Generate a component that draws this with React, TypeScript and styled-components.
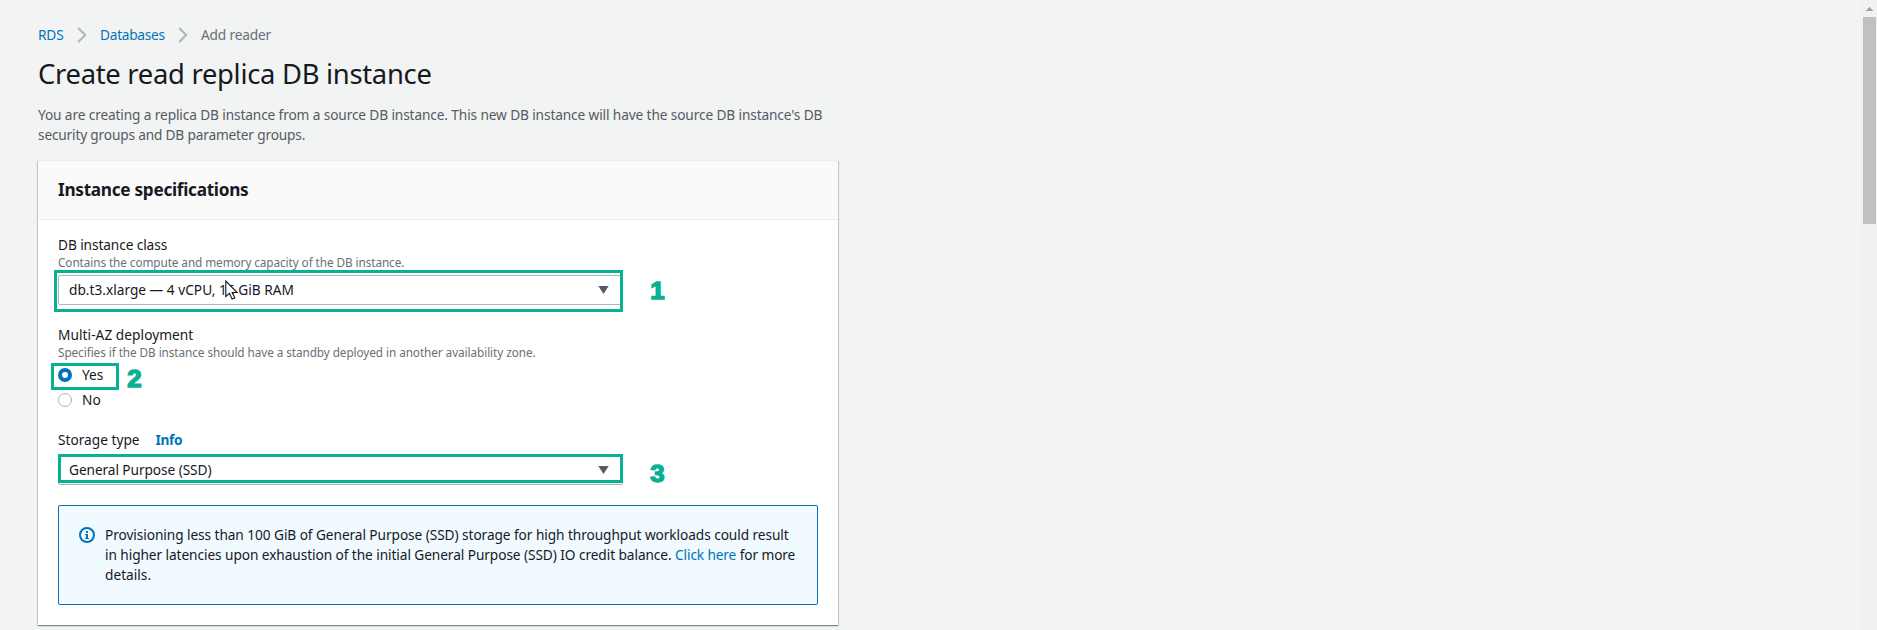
import React from 'react';
import styled, { createGlobalStyle, css } from 'styled-components';

const GlobalStyle = createGlobalStyle`
  * { box-sizing: border-box; }
  html, body { margin: 0; height: 100%; overflow: hidden; }
  body {
    background: #f2f3f3;
    color: #16191f;
    font: 400 13.7px/20px 'Noto Sans', 'Open Sans', sans-serif;
  }
`;

const tracked = css<{ $track?: number }>`
  letter-spacing: ${(p) => p.$track ?? 0}px;
`;

const Page = styled.div`
  display: flex;
  justify-content: space-between;
  height: 630px;
  overflow: hidden;
`;

const Main = styled.main`
  width: 800px;
  margin-left: 38px;
  padding-top: 25px;
  flex: none;
`;

const Breadcrumbs = styled.nav`
  display: flex;
  align-items: center;
  height: 20px;
  white-space: nowrap;
`;

const Crumb = styled.a<{ $track?: number; $width?: number; $current?: boolean }>`
  ${tracked}
  width: ${(p) => (p.$width ? `${p.$width}px` : 'auto')};
  color: ${(p) => (p.$current ? '#687078' : '#0073bb')};
`;

const Chevron = styled.svg`
  width: 10px;
  height: 16px;
  flex: none;
  margin: 0 13px 0 13px;
  fill: none;
  stroke: #aab7b8;
  stroke-width: 2;
`;

const Title = styled.h1`
  margin: 11px 0 13px;
  font-size: 27.4px;
  font-weight: 400;
  line-height: 36px;
  letter-spacing: -0.29px;
`;

const Intro = styled.p<{ $track?: number }>`
  margin: 0 0 15px;
  color: #545b64;
  white-space: nowrap;
`;

const Run = styled.span<{ $track?: number }>`
  ${tracked}
`;

const Card = styled.section`
  background: #fff;
  border-top: 1px solid #eaeded;
  box-shadow: 0 1px 1px 0 rgba(0, 28, 36, 0.3), 1px 1px 1px 0 rgba(0, 28, 36, 0.15),
    -1px 1px 1px 0 rgba(0, 28, 36, 0.15);
`;

const CardHeader = styled.header`
  height: 59px;
  padding: 19px 20px;
  background: #fafafa;
  border-bottom: 1px solid #eaeded;
`;

const CardTitle = styled.h2`
  margin: 0;
  font-size: 17.2px;
  font-weight: 700;
  line-height: 20px;
  letter-spacing: -0.28px;
`;

const CardBody = styled.div`
  display: flex;
  flex-direction: column;
  gap: 20px;
  padding: 15px 20px 20px;
`;

const Field = styled.div`
  display: flex;
  flex-direction: column;
  align-items: flex-start;
`;

const Label = styled.div<{ $track?: number; $gap?: number }>`
  ${tracked}
  display: flex;
  margin-bottom: ${(p) => p.$gap ?? 0}px;
`;

const Hint = styled.div<{ $track?: number }>`
  ${tracked}
  margin: -1px 0 5px;
  color: #687078;
  font-size: 11.75px;
  line-height: 16px;
`;

const InfoLink = styled.a`
  margin-left: 16px;
  color: #0073bb;
  font-weight: 700;
  letter-spacing: -0.4px;
`;

const SelectBox = styled.div`
  position: relative;
  display: flex;
  align-items: center;
  justify-content: space-between;
  width: 565px;
  height: 30px;
  padding: 0 13px 0 10px;
  background: #fff;
  border: 1px solid #aab7b8;
  border-radius: 2px;
`;

const Caret = styled.svg`
  width: 11px;
  height: 8px;
  fill: #545b64;
`;

const RadioRow = styled.div<{ $last?: boolean }>`
  position: relative;
  display: flex;
  align-items: center;
  gap: 10px;
  height: 20px;
  margin-bottom: ${(p) => (p.$last ? 0 : 5)}px;
`;

const Radio = styled.span<{ $checked?: boolean }>`
  width: 14px;
  height: 14px;
  border-radius: 50%;
  background: #fff;
  border: ${(p) => (p.$checked ? '4px solid #0073bb' : '1px solid #aab7b8')};
`;

const Highlight = styled.div<{ $x: number; $y: number; $w: number; $h: number }>`
  position: absolute;
  left: ${(p) => p.$x}px;
  top: ${(p) => p.$y}px;
  width: ${(p) => p.$w}px;
  height: ${(p) => p.$h}px;
  border: 3px solid #09b193;
`;

const StepNumber = styled.span<{ $x: number; $y: number }>`
  position: absolute;
  left: ${(p) => p.$x}px;
  top: ${(p) => p.$y}px;
  color: #09b193;
  font: 700 23px/24px 'Liberation Sans', Arial, sans-serif;
  -webkit-text-stroke: 1.4px #09b193;
  transform: scaleX(1.12);
`;

const Pointer = styled.svg`
  position: absolute;
  left: 166px;
  top: 4px;
  width: 13px;
  height: 20px;
`;

const Alert = styled.div`
  display: flex;
  gap: 10px;
  width: 760px;
  height: 100px;
  padding: 19px 20px;
  background: #f1faff;
  border: 1px solid #0073bb;
  border-radius: 2px;
  white-space: nowrap;
`;

const AlertIcon = styled.svg`
  width: 16px;
  height: 16px;
  margin-top: 2px;
  flex: none;
`;

const AlertText = styled.p`
  margin: 0;
`;

const Link = styled.a<{ $track?: number }>`
  ${tracked}
  color: #0073bb;
`;

const Scrollbar = styled.div`
  display: flex;
  flex-direction: column;
  align-items: flex-end;
  width: 16px;
  padding: 7px 1px 0 0;
  background: #f1f1f1;
`;

const ScrollArrow = styled.svg`
  width: 7px;
  height: 4px;
  margin: 0 3px 6px 0;
  fill: #a3a3a3;
`;

const ScrollThumb = styled.div`
  width: 13px;
  height: 207px;
  background: #c1c1c1;
`;

const Separator = () => (
  <Chevron viewBox="0 0 10 16">
    <path d="M1.2 1l7 7-7 7" />
  </Chevron>
);

const CaretDown = () => (
  <Caret viewBox="0 0 11 8">
    <path d="M0.3 0h10.4L5.5 8z" />
  </Caret>
);

export default function App() {
  return (
    <>
      <GlobalStyle />
      <Page>
        <Main>
          <Breadcrumbs>
            <Crumb $track={-0.15} $width={26}>RDS</Crumb>
            <Separator />
            <Crumb $track={-0.27} $width={65}>Databases</Crumb>
            <Separator />
            <Crumb $current $track={-0.17}>Add reader</Crumb>
          </Breadcrumbs>
          <Title>Create read replica DB instance</Title>
          <Intro>
            <Run $track={-0.125}>
              You are creating a replica DB instance from a source DB instance. This new DB instance will have the
              source DB instance's DB
            </Run>
            <br />
            <Run $track={-0.18}>security groups and DB parameter groups.</Run>
          </Intro>

          <Card>
            <CardHeader>
              <CardTitle>Instance specifications</CardTitle>
            </CardHeader>
            <CardBody>
              <Field>
                <Label $track={-0.1}>DB instance class</Label>
                <Hint $track={-0.075}>Contains the compute and memory capacity of the DB instance.</Hint>
                <SelectBox>
                  <Run>db.t3.xlarge — 4 vCPU, 16 GiB RAM</Run>
                  <CaretDown />
                  <Highlight $x={-5} $y={-6} $w={569} $h={42} />
                  <StepNumber $x={592} $y={3}>1</StepNumber>
                  <Pointer viewBox="0 0 13 20">
                    <path
                      d="M0.8 1v15.5l3.7-3.2 2.6 5.7 2.7-1.1-2.6-5.4h5z"
                      fill="#fff"
                      stroke="#16191f"
                      strokeWidth="1.1"
                    />
                  </Pointer>
                </SelectBox>
              </Field>

              <Field>
                <Label $track={0.05}>Multi-AZ deployment</Label>
                <Hint $track={-0.065}>
                  Specifies if the DB instance should have a standby deployed in another availability zone.
                </Hint>
                <RadioRow>
                  <Radio $checked />
                  <Run>Yes</Run>
                  <Highlight $x={-7} $y={-2} $w={68} $h={27} />
                  <StepNumber $x={70} $y={2}>2</StepNumber>
                </RadioRow>
                <RadioRow $last>
                  <Radio />
                  <Run>No</Run>
                </RadioRow>
              </Field>

              <Field>
                <Label $gap={5}>
                  Storage type <InfoLink>Info</InfoLink>
                </Label>
                <SelectBox>
                  <Run $track={-0.08}>General Purpose (SSD)</Run>
                  <CaretDown />
                  <Highlight $x={-1} $y={-2} $w={565} $h={29} />
                  <StepNumber $x={592} $y={6}>3</StepNumber>
                </SelectBox>
              </Field>

              <Alert>
                <AlertIcon viewBox="0 0 16 16">
                  <circle cx="8" cy="8" r="7" fill="none" stroke="#0073bb" strokeWidth="2" />
                  <path d="M7 4h2v2H7zM6 7h3v4h1v1H6v-1h1V8H6z" fill="#0073bb" />
                </AlertIcon>
                <AlertText>
                  <Run $track={-0.075}>
                    Provisioning less than 100 GiB of General Purpose (SSD) storage for high throughput workloads
                    could result
                  </Run>
                  <br />
                  <Run $track={-0.08}>
                    in higher latencies upon exhaustion of the initial General Purpose (SSD) IO credit balance.{' '}
                  </Run>
                  <Link $track={-0.13}>Click here</Link>
                  <Run $track={-0.1}> for more</Run>
                  <br />
                  <Run>details.</Run>
                </AlertText>
              </Alert>
            </CardBody>
          </Card>
        </Main>
        <Scrollbar>
          <ScrollArrow viewBox="0 0 7 4">
            <path d="M3 0h1v1h1v1h1v1h1v1H0V3h1V2h1V1h1z" />
          </ScrollArrow>
          <ScrollThumb />
        </Scrollbar>
      </Page>
    </>
  );
}
